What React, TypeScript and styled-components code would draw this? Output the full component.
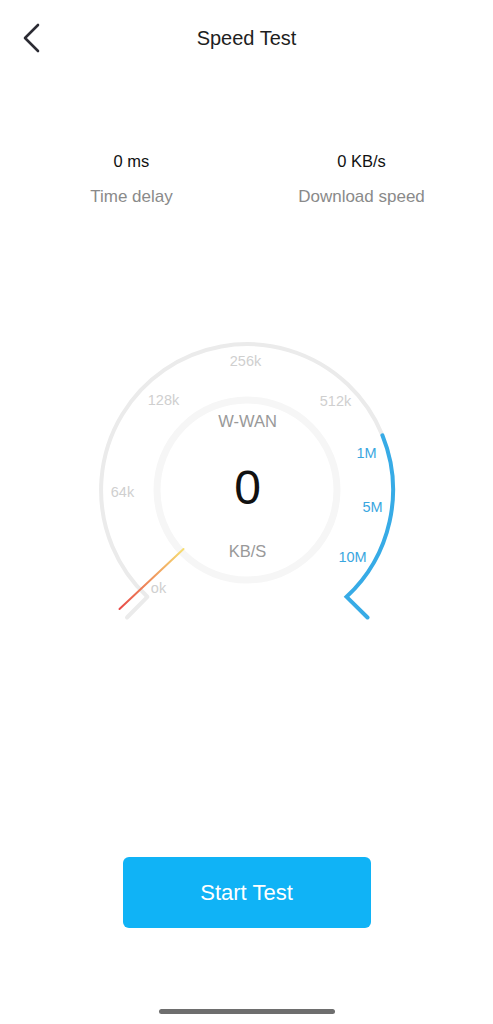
import React from "react";
import styled, { createGlobalStyle } from "styled-components";

const Global = createGlobalStyle`
  html, body { margin: 0; padding: 0; background: #ffffff; }
  body { font-family: "Liberation Sans", Arial, sans-serif; }
`;

const Page = styled.div`
  width: 493px;
  min-height: 1024px;
  display: flex;
  flex-direction: column;
  align-items: stretch;
  background: #fff;
`;

const Header = styled.header`
  height: 76px;
  display: grid;
  grid-template-columns: 60px 1fr 60px;
  align-items: center;
`;

const BackButton = styled.button`
  border: none;
  background: none;
  padding: 0 0 0 22px;
  height: 40px;
  display: flex;
  align-items: center;
  cursor: pointer;
`;

const Title = styled.h1`
  margin: 0;
  text-align: center;
  font-size: 20px;
  font-weight: 400;
  color: #1e1e1e;
`;

const Stats = styled.section`
  margin-top: 75px;
  display: grid;
  grid-template-columns: 230px 230px;
  justify-content: center;
`;

const Stat = styled.div`
  display: flex;
  flex-direction: column;
  align-items: center;
  gap: 16px;
`;

const StatValue = styled.div`
  font-size: 16.5px;
  line-height: 20px;
  color: #111;
`;

const StatLabel = styled.div`
  font-size: 17px;
  line-height: 20px;
  color: #8a8a8a;
`;

const GaugeWrap = styled.div`
  margin-top: 123px;
  display: flex;
  justify-content: center;
`;

const ActionArea = styled.div`
  margin-top: 227px;
  display: flex;
  justify-content: center;
`;

const StartButton = styled.button`
  width: 248px;
  height: 71px;
  border: none;
  border-radius: 6px;
  background: #10b3f6;
  color: #fff;
  font-family: "Liberation Sans", Arial, sans-serif;
  font-size: 22px;
  cursor: pointer;
`;

const HomeIndicator = styled.div`
  margin: 81px auto 0;
  width: 176px;
  height: 5px;
  border-radius: 3px;
  background: #6e6e6e;
`;

const greyLabels: [string, number, number][] = [
  ["256k", 158.5, 31],
  ["128k", 76.5, 70],
  ["512k", 248.5, 71],
  ["64k", 35.5, 162],
  ["ok", 71.5, 258],
];

const blueLabels: [string, number, number][] = [
  ["1M", 279.5, 123],
  ["5M", 285.5, 177],
  ["10M", 265.5, 227],
];

function Gauge() {
  return (
    <svg width="320" height="300" viewBox="0 0 320 300" fontFamily="Liberation Sans, Arial, sans-serif">
      <defs>
        <linearGradient id="needle" x1="32.5" y1="279" x2="96.5" y2="219" gradientUnits="userSpaceOnUse">
          <stop offset="0" stopColor="#e84a48" />
          <stop offset="1" stopColor="#f6de72" />
        </linearGradient>
      </defs>
      <circle cx="160" cy="160" r="90" fill="none" stroke="#f6f6f6" strokeWidth="7" />
      <path
        d="M60.4 266.8 A146 146 0 1 1 295.4 105.3"
        fill="none"
        stroke="#ebebeb"
        strokeWidth="4"
      />
      <path d="M60.4 266.8 L40 287.5" fill="none" stroke="#ebebeb" strokeWidth="4" strokeLinecap="round" />
      <path
        d="M295.4 105.3 A146 146 0 0 1 259.6 266.8 L280.5 287.5"
        fill="none"
        stroke="#37abe6"
        strokeWidth="4"
        strokeLinecap="round"
        strokeLinejoin="miter"
      />
      <line x1="32.5" y1="279" x2="96.5" y2="219" stroke="url(#needle)" strokeWidth="2" strokeLinecap="round" />
      {greyLabels.map(([t, x, y]) => (
        <text key={t} x={x} y={y} textAnchor="middle" dominantBaseline="central" fontSize="14.5" fill="#cfcfcf">
          {t}
        </text>
      ))}
      {blueLabels.map(([t, x, y]) => (
        <text key={t} x={x} y={y} textAnchor="middle" dominantBaseline="central" fontSize="14.5" fill="#3aa6e0">
          {t}
        </text>
      ))}
      <text x="160.5" y="91" textAnchor="middle" dominantBaseline="central" fontSize="16.5" fill="#999">
        W-WAN
      </text>
      <text x="160.5" y="157" textAnchor="middle" dominantBaseline="central" fontSize="48" fill="#111">
        0
      </text>
      <text x="160.5" y="221" textAnchor="middle" dominantBaseline="central" fontSize="16.5" fill="#999">
        KB/S
      </text>
    </svg>
  );
}

export default function App() {
  return (
    <Page>
      <Global />
      <Header>
        <BackButton aria-label="Back">
          <svg width="18" height="30" viewBox="0 0 18 30">
            <path d="M16 2 L3 15 L16 28" fill="none" stroke="#2b2b33" strokeWidth="2.6" strokeLinecap="round" strokeLinejoin="round" />
          </svg>
        </BackButton>
        <Title>Speed Test</Title>
        <div />
      </Header>
      <Stats>
        <Stat>
          <StatValue>0 ms</StatValue>
          <StatLabel>Time delay</StatLabel>
        </Stat>
        <Stat>
          <StatValue>0 KB/s</StatValue>
          <StatLabel>Download speed</StatLabel>
        </Stat>
      </Stats>
      <GaugeWrap>
        <Gauge />
      </GaugeWrap>
      <ActionArea>
        <StartButton>Start Test</StartButton>
      </ActionArea>
      <HomeIndicator />
    </Page>
  );
}
